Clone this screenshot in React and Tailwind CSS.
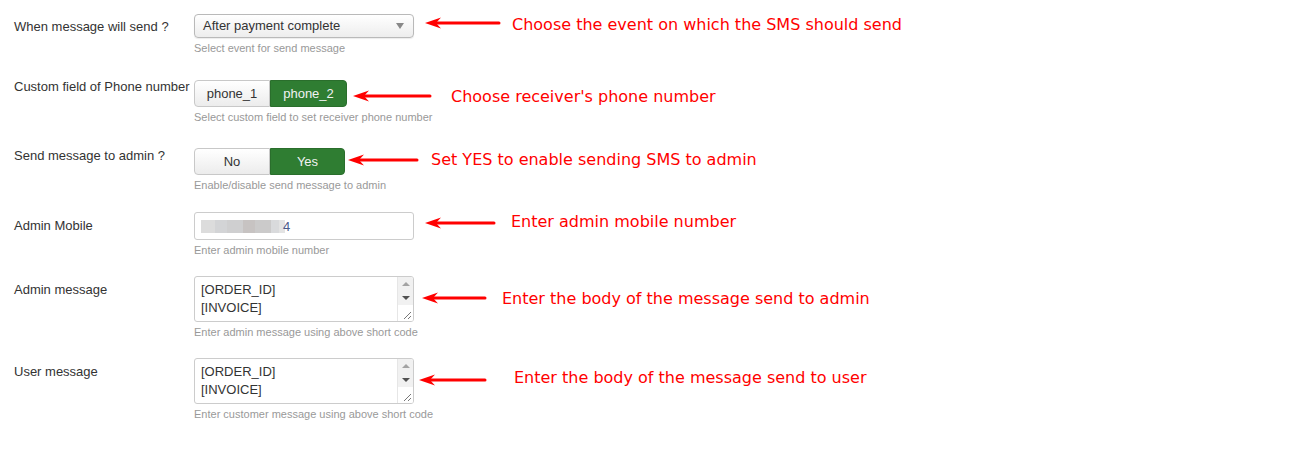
import React from 'react';

const labelFont = { fontFamily: '"Liberation Sans", Arial, sans-serif' };

function Arrow({ x1, x2, y }) {
  const w = x1 - x2;
  return (
    <svg
      className="absolute"
      style={{ left: x2, top: y - 8, width: w + 2, height: 16 }}
      viewBox={`0 0 ${w + 2} 16`}
    >
      <line x1={w} y1="8" x2="10" y2="8" stroke="#f00" strokeWidth="3" strokeLinecap="round" />
      <path d="M1 8 L17 2.5 L12 8 L17 13.5 Z" fill="#f00" />
    </svg>
  );
}

function Note({ x, y, children }) {
  return (
    <div
      className="absolute whitespace-nowrap text-[16px] leading-[20px] text-[#f00]"
      style={{ left: x, top: y - 9, fontFamily: '"DejaVu Sans", sans-serif' }}
    >
      {children}
    </div>
  );
}

function Help({ children }) {
  return <div className="mt-[3px] text-[11px] leading-[14px] text-[#999]">{children}</div>;
}

function Row({ label, labelClass, className, children }) {
  return (
    <div className={`flex ${className}`}>
      <div className={`w-[180px] shrink-0 text-[13px] leading-[18px] text-[#333] ${labelClass}`}>{label}</div>
      <div>{children}</div>
    </div>
  );
}

function Toggle({ left, right, rightWidth }) {
  return (
    <div className="flex h-full text-[13px]">
      <div className="flex w-[76px] items-center justify-center rounded-l-[4px] border border-[#c8c8c8] bg-gradient-to-b from-white to-[#ececec] text-[#333]">
        {left}
      </div>
      <div className={`flex ${rightWidth} items-center justify-center rounded-r-[4px] border border-[#2a6e2c] bg-[#2f7d32] text-[#f2f2f2]`}>
        {right}
      </div>
    </div>
  );
}

function FakeTextarea() {
  return (
    <div className="flex h-[46px] w-[220px] overflow-hidden rounded-[3px] border border-[#ccc] bg-white">
      <div className="flex-1 pl-[6px] pt-[4px] text-[13px] leading-[18px] text-[#333]">
        <div>[ORDER_ID]</div>
        <div>[INVOICE]</div>
      </div>
      <div className="flex w-[16px] flex-col border-l border-[#e6e6e6] bg-[#f1f1f1]">
        <div className="flex h-[14px] items-center justify-center">
          <div className="h-0 w-0 border-x-[4px] border-b-[4px] border-x-transparent border-b-[#a3a3a3]" />
        </div>
        <div className="flex h-[14px] items-center justify-center">
          <div className="h-0 w-0 border-x-[4px] border-t-[4px] border-x-transparent border-t-[#505050]" />
        </div>
        <div className="relative flex-1 bg-white">
          <svg className="absolute bottom-[1px] right-[1px]" width="10" height="10" viewBox="0 0 10 10">
            <line x1="2" y1="9" x2="9" y2="2" stroke="#777" strokeWidth="1" />
            <line x1="6" y1="9" x2="9" y2="6" stroke="#777" strokeWidth="1" />
          </svg>
        </div>
      </div>
    </div>
  );
}

export default function App() {
  return (
    <div className="relative h-[466px] w-[1291px] overflow-hidden bg-white pl-[14px] pt-[14px]" style={labelFont}>
      <Row label="When message will send ?" labelClass="pt-[4px]">
        <div className="flex h-[24px] w-[220px] items-center justify-between rounded-[4px] border border-[#b9b9b9] bg-gradient-to-b from-white to-[#ededed] pl-[8px] pr-[9px] text-[13px] text-[#333] shadow-[0_1px_1px_rgba(0,0,0,0.08)]">
          <span>After payment complete</span>
          <div className="h-0 w-0 border-x-[4px] border-t-[6px] border-x-transparent border-t-[#888]" />
        </div>
        <Help>Select event for send message</Help>
      </Row>

      <Row label="Custom field of Phone number" labelClass="-mt-[2px]" className="mt-[25px]">
        <div className="h-[27px]">
          <Toggle left="phone_1" right="phone_2" rightWidth="w-[77px]" />
        </div>
        <Help>Select custom field to set receiver phone number</Help>
      </Row>

      <Row label="Send message to admin ?" labelClass="-mt-[1px]" className="mt-[24px]">
        <div className="h-[27px]">
          <Toggle left="No" right="Yes" rightWidth="w-[75px]" />
        </div>
        <Help>Enable/disable send message to admin</Help>
      </Row>

      <Row label="Admin Mobile" labelClass="pt-[5px]" className="mt-[20px]">
        <div className="flex h-[28px] w-[220px] items-center rounded-[3px] border border-[#ccc] bg-white pl-[6px] text-[13px] text-[#333]">
          <div className="flex h-[13px]">
            <div className="w-[14px] bg-[#dcdcdc]" />
            <div className="w-[12px] bg-[#d3d4d6]" />
            <div className="w-[16px] bg-[#cfcfd0]" />
            <div className="w-[12px] bg-[#c7c3c2]" />
            <div className="w-[16px] bg-[#cbcaca]" />
            <div className="w-[8px] bg-[#d9dadc]" />
            <div className="w-[6px] bg-[#e3e3e3]" />
          </div>
          <span className="-ml-[2px] leading-[13px] text-[#4a5a8a]">4</span>
        </div>
        <Help>Enter admin mobile number</Help>
      </Row>

      <Row label="Admin message" labelClass="pt-[5px]" className="mt-[19px]">
        <FakeTextarea />
        <Help>Enter admin message using above short code</Help>
      </Row>

      <Row label="User message" labelClass="pt-[5px]" className="mt-[19px]">
        <FakeTextarea />
        <Help>Enter customer message using above short code</Help>
      </Row>

      <Arrow x1={499} x2={424} y={23} />
      <Note x={512} y={24}>Choose the event on which the SMS should send</Note>
      <Arrow x1={430} x2={352} y={96} />
      <Note x={451} y={96}>Choose receiver's phone number</Note>
      <Arrow x1={417} x2={347} y={160} />
      <Note x={431} y={159}>Set YES to enable sending SMS to admin</Note>
      <Arrow x1={494} x2={424} y={223} />
      <Note x={511} y={221}>Enter admin mobile number</Note>
      <Arrow x1={485} x2={421} y={298} />
      <Note x={502} y={298}>Enter the body of the message send to admin</Note>
      <Arrow x1={485} x2={418} y={380} />
      <Note x={514} y={377}>Enter the body of the message send to user</Note>
    </div>
  );
}
